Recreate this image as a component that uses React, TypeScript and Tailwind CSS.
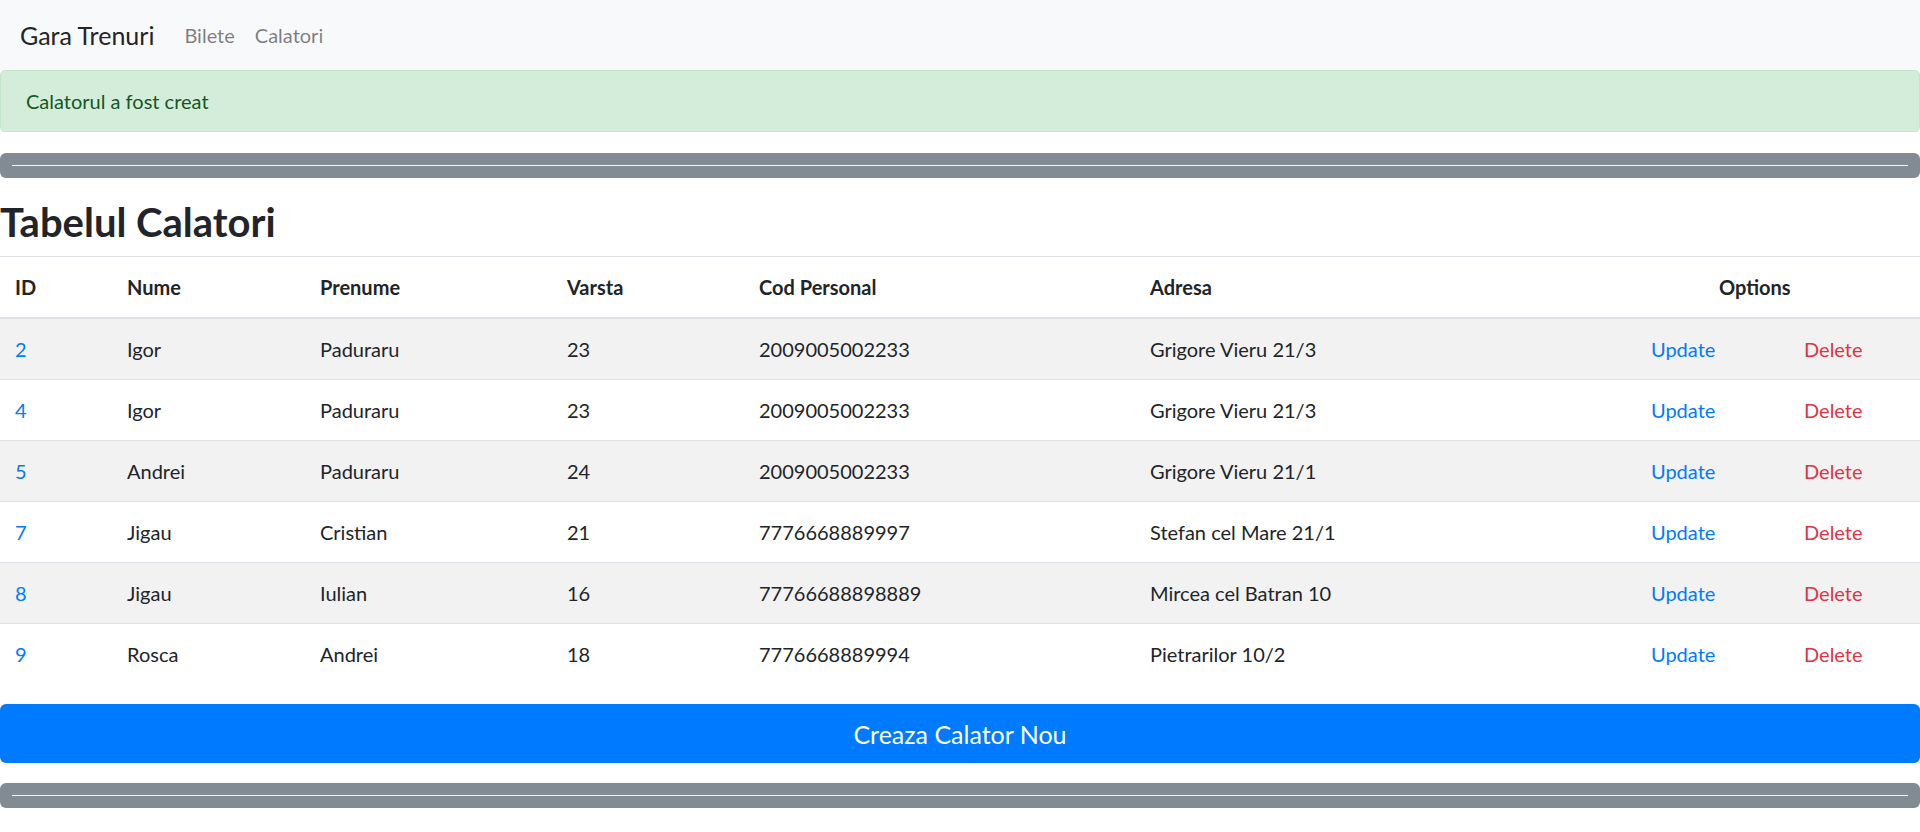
const rows = [
  { id: 2, nume: "Igor", prenume: "Paduraru", varsta: 23, cod: "2009005002233", adresa: "Grigore Vieru 21/3" },
  { id: 4, nume: "Igor", prenume: "Paduraru", varsta: 23, cod: "2009005002233", adresa: "Grigore Vieru 21/3" },
  { id: 5, nume: "Andrei", prenume: "Paduraru", varsta: 24, cod: "2009005002233", adresa: "Grigore Vieru 21/1" },
  { id: 7, nume: "Jigau", prenume: "Cristian", varsta: 21, cod: "7776668889997", adresa: "Stefan cel Mare 21/1" },
  { id: 8, nume: "Jigau", prenume: "Iulian", varsta: 16, cod: "77766688898889", adresa: "Mircea cel Batran 10" },
  { id: 9, nume: "Rosca", prenume: "Andrei", varsta: 18, cod: "7776668889994", adresa: "Pietrarilor 10/2" },
];

const Divider = () => (
  <div className="rounded-[6px] bg-[#828a94] px-[12px] py-[12px]">
    <div className="h-px bg-[#f2f3f4]" />
  </div>
);

export default function App() {
  return (
    <div className="min-h-screen bg-white font-['Lato','Liberation_Sans',sans-serif] text-[20px] leading-[30px] text-[#212529]">
      <nav className="flex h-[70px] items-center bg-[#f8f9fa] px-[20px]">
        <span className="mr-[20px] text-[25px] leading-[37px]">Gara Trenuri</span>
        <a className="px-[10px] text-black/50">Bilete</a>
        <a className="px-[10px] text-black/50">Calatori</a>
      </nav>

      <div className="rounded-[5px] border border-[#c3e6cb] bg-[#d4edda] px-[25px] py-[15px] text-[#155724]">
        Calatorul a fost creat
      </div>

      <div className="mt-[21px]">
        <Divider />
      </div>

      <h2 className="mt-[20px] mb-[10px] text-[40px] leading-[48px] font-bold">Tabelul Calatori</h2>

      <table className="w-full table-fixed border-collapse">
        <colgroup>
          <col className="w-[112px]" />
          <col className="w-[193px]" />
          <col className="w-[247px]" />
          <col className="w-[192px]" />
          <col className="w-[391px]" />
          <col className="w-[501px]" />
          <col className="w-[153px]" />
          <col className="w-[131px]" />
        </colgroup>
        <thead>
          <tr className="border-t border-b-2 border-[#dee2e6] text-left font-bold">
            <th className="p-[15px]">ID</th>
            <th className="p-[15px]">Nume</th>
            <th className="p-[15px]">Prenume</th>
            <th className="p-[15px]">Varsta</th>
            <th className="p-[15px]">Cod Personal</th>
            <th className="p-[15px]">Adresa</th>
            <th colSpan={2} className="py-[15px] pl-[83px]">Options</th>
          </tr>
        </thead>
        <tbody>
          {rows.map((r, i) => (
            <tr
              key={r.id}
              className={`border-t border-[#dee2e6] ${i % 2 === 0 ? "bg-[#f2f2f2]" : "bg-white"}`}
            >
              <td className="p-[15px] text-[#007bff]">{r.id}</td>
              <td className="p-[15px]">{r.nume}</td>
              <td className="p-[15px]">{r.prenume}</td>
              <td className="p-[15px]">{r.varsta}</td>
              <td className="p-[15px]">{r.cod}</td>
              <td className="p-[15px]">{r.adresa}</td>
              <td className="p-[15px] text-[#007bff]">Update</td>
              <td className="p-[15px] text-[#dc3545]">Delete</td>
            </tr>
          ))}
        </tbody>
      </table>

      <button className="mt-[20px] block h-[59px] w-full rounded-[6px] bg-[#007bff] text-[25px] text-white">
        Creaza Calator Nou
      </button>

      <div className="mt-[20px]">
        <Divider />
      </div>
    </div>
  );
}
